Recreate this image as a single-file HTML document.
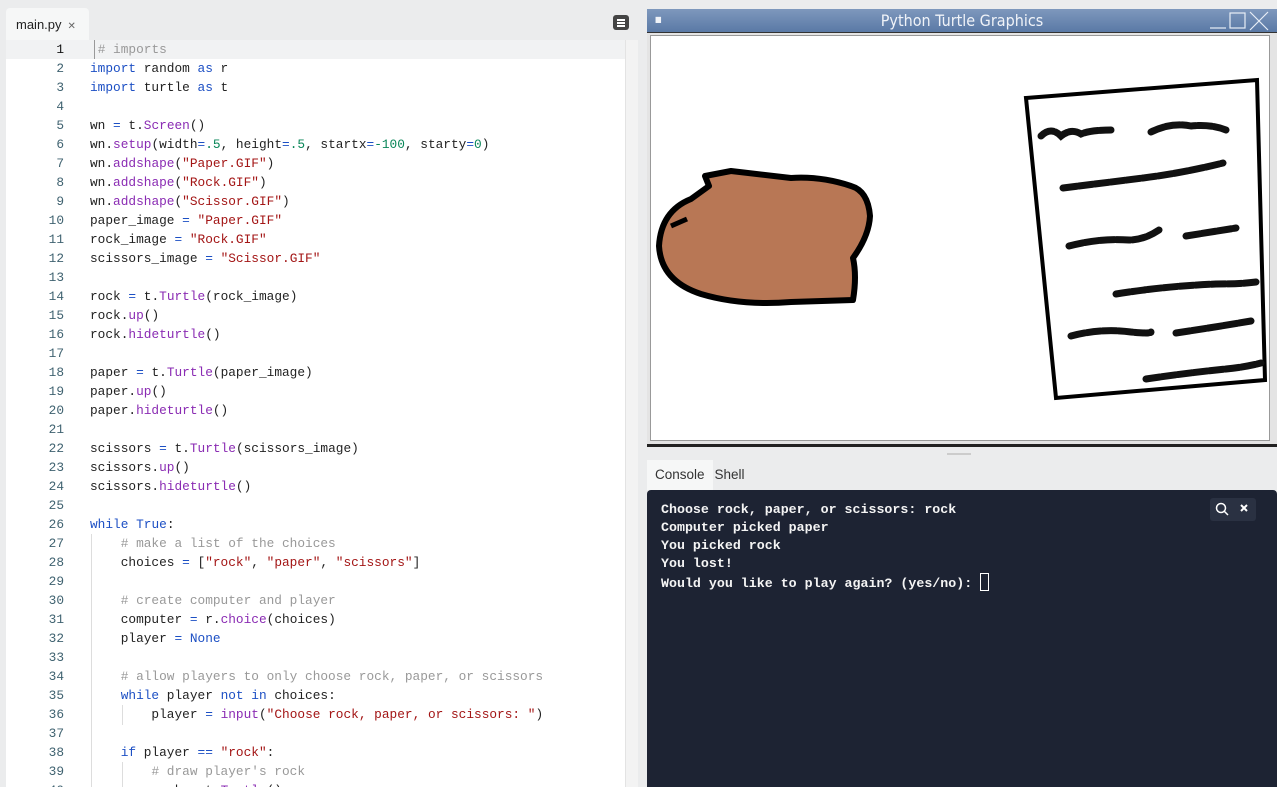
<!DOCTYPE html>
<html><head><meta charset="utf-8"><style>
*{margin:0;padding:0;box-sizing:border-box}
html,body{width:1277px;height:787px;overflow:hidden}
body{background:#ebeced;position:relative;font-family:"Liberation Sans",sans-serif}
.tab{position:absolute;left:6px;top:8px;width:83px;height:32px;background:#f6f7f7;border-radius:4px 4px 0 0;font-size:13px;color:#222;padding:9px 0 0 10px}
.tab span{color:#666;font-size:10px;margin-left:6px}
.editor{position:absolute;left:6px;top:40px;width:619px;height:747px;background:#fff;overflow:hidden}
.sb{position:absolute;left:625px;top:40px;width:13px;height:747px;background:#f3f3f3;border-left:1px solid #e3e3e3}
.hl{position:absolute;left:0;top:0;width:619px;height:19px;background:#f1f2f3}
.code{position:absolute;left:0;top:0;font-family:"Liberation Mono",monospace;font-size:12.8px;line-height:19px;white-space:pre}
.ln{position:absolute;left:0;width:58px;text-align:right;color:#3f6270}
.tx{position:absolute;left:84px;color:#222}
.k{color:#1c4fc4}.s{color:#a31515}.f{color:#8a2bb3}.n{color:#098658}.c{color:#999}.o{color:#1c4fc4}
.guide{position:absolute;width:1px;background:#ddd}
.win{position:absolute;left:647px;top:9px;width:630px;height:438px;background:#e4e4e4}
.title{height:24px;background:linear-gradient(#7e98bd,#5a79a6);color:#f0f3f8;font-family:"DejaVu Sans Condensed","DejaVu Sans",sans-serif;font-stretch:condensed;font-size:16px;text-align:center;line-height:24px;position:relative;border-bottom:1px solid #333}
.canvas{position:absolute;left:3px;top:26px;width:620px;height:406px;background:#fff;border:1px solid #999}
.ctabs{position:absolute;left:647px;top:460px;font-size:13.5px;color:#333}
.cons{position:absolute;left:647px;top:490px;width:630px;height:297px;background:#1d2333;border-radius:4px 4px 0 0;font-family:"Liberation Mono",monospace;font-size:13.3px;line-height:18px;color:#f4f4f4;padding:11px 14px;white-space:pre;font-weight:bold}
</style></head><body>
<div class="tab">main.py<span>✕</span></div>
<div style="position:absolute;left:613px;top:15px;width:16px;height:15px;background:#444;border-radius:3px"><div style="position:absolute;left:4px;top:4px;width:8px;height:1.5px;background:#fff;box-shadow:0 3px 0 #fff,0 6px 0 #fff"></div></div>
<div class="editor">
<div class="hl"></div>
<div class="guide" style="left:88px;top:0;height:19px;background:#999"></div>
<div class="guide" style="left:85px;top:494px;height:253px"></div>
<div class="guide" style="left:116px;top:665px;height:20px"></div>
<div class="guide" style="left:116px;top:722px;height:25px"></div>
<div class="code">
<div class="ln" style="top:0"><span style="color:#111">1</span>
2
3
4
5
6
7
8
9
10
11
12
13
14
15
16
17
18
19
20
21
22
23
24
25
26
27
28
29
30
31
32
33
34
35
36
37
38
39
40</div>
<div class="tx" style="top:0"> <span class="c"># imports</span>
<span class="k">import</span> random <span class="k">as</span> r
<span class="k">import</span> turtle <span class="k">as</span> t

wn <span class="o">=</span> t.<span class="f">Screen</span>()
wn.<span class="f">setup</span>(width<span class="o">=</span><span class="n">.5</span>, height<span class="o">=</span><span class="n">.5</span>, startx<span class="o">=</span><span class="n">-100</span>, starty<span class="o">=</span><span class="n">0</span>)
wn.<span class="f">addshape</span>(<span class="s">"Paper.GIF"</span>)
wn.<span class="f">addshape</span>(<span class="s">"Rock.GIF"</span>)
wn.<span class="f">addshape</span>(<span class="s">"Scissor.GIF"</span>)
paper_image <span class="o">=</span> <span class="s">"Paper.GIF"</span>
rock_image <span class="o">=</span> <span class="s">"Rock.GIF"</span>
scissors_image <span class="o">=</span> <span class="s">"Scissor.GIF"</span>

rock <span class="o">=</span> t.<span class="f">Turtle</span>(rock_image)
rock.<span class="f">up</span>()
rock.<span class="f">hideturtle</span>()

paper <span class="o">=</span> t.<span class="f">Turtle</span>(paper_image)
paper.<span class="f">up</span>()
paper.<span class="f">hideturtle</span>()

scissors <span class="o">=</span> t.<span class="f">Turtle</span>(scissors_image)
scissors.<span class="f">up</span>()
scissors.<span class="f">hideturtle</span>()

<span class="k">while</span> <span class="k">True</span>:
    <span class="c"># make a list of the choices</span>
    choices <span class="o">=</span> [<span class="s">"rock"</span>, <span class="s">"paper"</span>, <span class="s">"scissors"</span>]

    <span class="c"># create computer and player</span>
    computer <span class="o">=</span> r.<span class="f">choice</span>(choices)
    player <span class="o">=</span> <span class="k">None</span>

    <span class="c"># allow players to only choose rock, paper, or scissors</span>
    <span class="k">while</span> player <span class="k">not in</span> choices:
        player <span class="o">=</span> <span class="f">input</span>(<span class="s">"Choose rock, paper, or scissors: "</span>)

    <span class="k">if</span> player <span class="o">==</span> <span class="s">"rock"</span>:
        <span class="c"># draw player's rock</span>
        rock <span class="o">=</span> t.<span class="f">Turtle</span>()</div>
</div></div>
<div class="sb"></div>
<div class="win">
<div class="title"><span style="position:absolute;left:8px;top:-1px;font-size:8px">■</span>Python Turtle Graphics
<svg style="position:absolute;right:4px;top:2px" width="66" height="20" viewBox="0 0 66 20" fill="none" stroke="#e8eef6" stroke-width="1.2"><path d="M3 17H19"/><rect x="23" y="2" width="15" height="15"/><path d="M43 1L61 19M61 1L43 19"/></svg></div>
<div class="canvas">
<svg width="620" height="406" viewBox="0 0 620 406">
<path d="M54 140 L58 150 L40 163 Q10 175 8 210 Q10 245 50 258 Q90 270 140 266 L202 264 Q206 240 202 222 Q218 200 219 180 Q217 155 200 150 Q170 140 140 142 L80 135 Z" fill="#b87755" stroke="#000" stroke-width="6" stroke-linejoin="round"/>
<path d="M20 190 L36 183" stroke="#000" stroke-width="5"/>
<path d="M375 62 L606 44 L614 344 L405 362 Z" fill="#fff" stroke="#000" stroke-width="4"/>
<g stroke="#111" stroke-width="7" fill="none" stroke-linecap="round" stroke-dasharray="14 2">
<path d="M390 100 q10 -10 20 0 q10 -8 20 -2 q10 -4 30 -4 M500 96 q20 -10 40 -6 q20 -2 35 4"/>
<path d="M412 152 q40 -5 80 -10 q40 -5 80 -15"/>
<path d="M418 210 q30 -8 60 -6 q15 0 30 -10 M535 200 q25 -4 50 -8"/>
<path d="M465 258 q50 -8 100 -10 q25 0 40 -2"/>
<path d="M420 300 q30 -8 60 -4 q20 2 20 0 M525 297 q40 -6 75 -12"/>
<path d="M495 343 q40 -6 80 -10 q20 -2 35 -6"/>
</g>
</svg></div>
</div>
<div style="position:absolute;left:647px;top:444px;width:630px;height:3px;background:#222"></div>
<div style="position:absolute;left:947px;top:453px;width:24px;height:2px;background:#ccc"></div>
<div class="ctabs"><span style="background:#f6f7f7;padding:7px 8px 8px 8px;display:inline-block">Console</span><span style="padding-left:2px">Shell</span></div>
<div class="cons">Choose rock, paper, or scissors: rock
Computer picked paper
You picked rock
You lost!
Would you like to play again? (yes/no): <span style="display:inline-block;width:9px;height:18px;border:1px solid #fff;vertical-align:-4px"></span></div>
<div style="position:absolute;left:1210px;top:498px;width:46px;height:23px;background:#2a3142;border-radius:3px">
<svg width="46" height="23" viewBox="0 0 46 23" fill="none" stroke="#fff" stroke-width="1.5"><circle cx="11" cy="10" r="4.5"/><path d="M14.5 13.5L18 17"/><path d="M31 7L37 13M37 7L31 13" stroke-width="2"/></svg></div>
</body></html>
